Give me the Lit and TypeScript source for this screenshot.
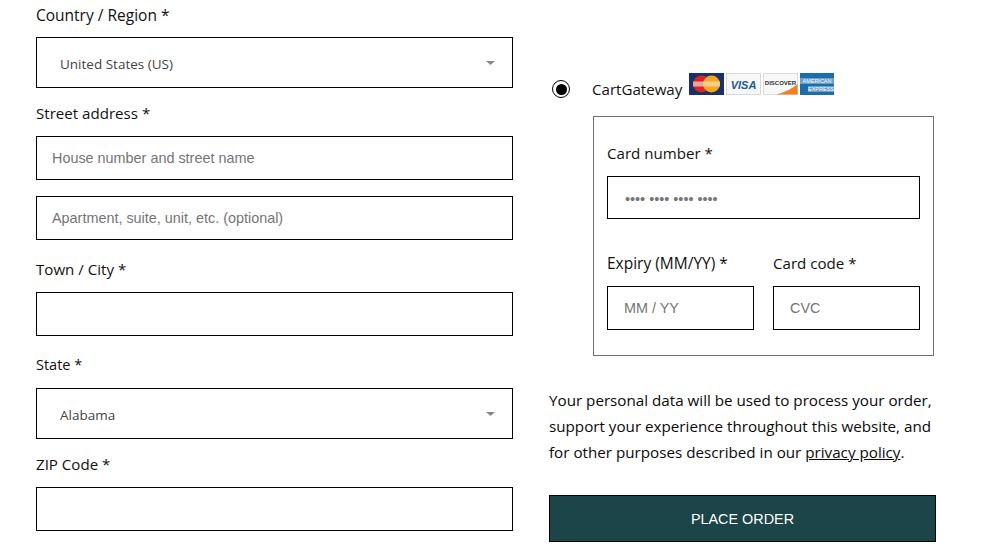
import { LitElement, html, css } from "lit";
import { customElement } from "lit/decorators.js";

const caret = html`<svg class="caret" width="9" height="4" viewBox="0 0 9 4"><path d="M0 0H9L4.500 4Z" fill="#888"/></svg>`;

@customElement("app-root")
export class AppRoot extends LitElement {
  static styles = css`
    :host { display: block; width: 993px; height: 553px; overflow: hidden; background: #fff; font-family: "Open Sans", "Noto Sans", sans-serif; font-size: 15.1px; color: #111; }
    * { box-sizing: border-box; }
    .page { display: flex; align-items: flex-start; padding-left: 36px; }
    .left { width: 477px; display: flex; flex-direction: column; flex: none; }
    .right { width: 387px; margin-left: 36px; flex: none; padding-top: 72px; display: flex; flex-direction: column; }
    .label { height: 22px; line-height: 22px; white-space: nowrap; }
    .wide { font-size: 15.5px; }
    .narrow { font-size: 14.5px; }
    .l0 { margin-top: 4px; margin-bottom: 11px; }
    .l1 { margin-top: 14px; margin-bottom: 12px; }
    .l2 { margin-top: 18px; margin-bottom: 12px; }
    .field { border: 1px solid #000; height: 44px; display: flex; align-items: center; padding-left: 15px; color: #757575; font-family: "Liberation Sans", Arial, sans-serif; font-size: 14.4px; background: #fff; }
    .gap { margin-top: 16px; }
    .select { height: 51px; padding-left: 23px; padding-right: 17px; justify-content: space-between; color: #444; font-family: "Open Sans", sans-serif; font-size: 13.5px; }
    .select span { padding-top: 3px; }
    .pay { display: flex; align-items: flex-start; height: 44px; }
    .radio { width: 18px; height: 18px; border-radius: 50%; border: 1.5px solid #000; margin: 8px 0 0 3px; display: flex; align-items: center; justify-content: center; flex: none; }
    .radio i { width: 11px; height: 11px; border-radius: 50%; background: #000; display: block; }
    .pay-name { margin-left: 22px; line-height: 22px; margin-top: 6px; }
    .logos { display: flex; gap: 2px; margin-left: 7px; margin-top: 1px; }
    .logos svg { display: block; }
    .box { border: 1px solid #6f6f6f; margin-left: 44px; width: 341px; height: 240px; padding: 25px 13px 0; display: flex; flex-direction: column; }
    .box .label { margin-bottom: 12px; }
    .box .field { height: 43px; padding-left: 16px; }
    .box .dots { padding-left: 17px; padding-top: 2px; }
    .split { display: flex; gap: 19px; margin-top: 33px; }
    .split > div { flex: 1 1 0; }
    .box .split .field { height: 44px; }
    .note { margin: 31px 0 0; line-height: 26px; white-space: nowrap; font-size: 15.2px; color: #0a0a0a; }
    .note a { color: inherit; text-decoration: underline; }
    .btn { margin-top: 30px; height: 47px; background: #1b4548; border: 1px solid #000; color: #fff; display: flex; align-items: center; justify-content: center; font-family: "Liberation Sans", Arial, sans-serif; font-size: 14.4px; }
  `;

  render() {
    return html`<div class="page">
      <div class="left">
        <div class="label l0 wide">Country / Region *</div>
        <div class="field select"><span>United States (US)</span>${caret}</div>
        <div class="label l1">Street address *</div>
        <div class="field">House number and street name</div>
        <div class="field gap">Apartment, suite, unit, etc. (optional)</div>
        <div class="label l2">Town / City *</div>
        <div class="field"></div>
        <div class="label l2 narrow">State *</div>
        <div class="field select"><span>Alabama</span>${caret}</div>
        <div class="label l1">ZIP Code *</div>
        <div class="field"></div>
      </div>
      <div class="right">
        <div class="pay">
          <span class="radio"><i></i></span>
          <span class="pay-name">CartGateway</span>
          <span class="logos">
            <svg width="35" height="22" viewBox="0 0 35 22"><rect width="35" height="22" fill="#1b2f6b"/><circle cx="12.500" cy="11" r="8.500" fill="#d9252b"/><circle cx="22.500" cy="11" r="8.500" fill="#f2a91e"/><rect x="4" y="8.500" width="27" height="5" fill="#f6dcc0" opacity=".7"/></svg>
            <svg width="35" height="22" viewBox="0 0 35 22"><rect x=".5" y=".5" width="34" height="21" fill="#f7f7f7" stroke="#d8d8d8"/><text x="17.500" y="15.500" text-anchor="middle" font-family="Liberation Sans" font-size="11" font-weight="700" font-style="italic" fill="#23598f">VISA</text></svg>
            <svg width="35" height="22" viewBox="0 0 35 22"><rect x=".5" y=".5" width="34" height="21" fill="#f8f8f8" stroke="#dcdcdc"/><path d="M13 21.500Q27 18 34.500 11V21.500Z" fill="#f0801f"/><text x="17.500" y="11.500" text-anchor="middle" font-family="Liberation Sans" font-size="6" font-weight="700" fill="#333">DISCOVER</text></svg>
            <svg width="34" height="22" viewBox="0 0 34 22"><rect width="34" height="22" fill="#1d6ea8"/><rect x="0" y="5" width="34" height="6" fill="#a9cbe4" opacity=".55"/><rect x="8" y="13" width="26" height="6" fill="#a9cbe4" opacity=".55"/><text x="17" y="10" text-anchor="middle" font-family="Liberation Sans" font-size="5.500" fill="#fff">AMERICAN</text><text x="21" y="18" text-anchor="middle" font-family="Liberation Sans" font-size="5.500" fill="#fff">EXPRESS</text></svg>
          </span>
        </div>
        <div class="box">
          <div class="label">Card number *</div>
          <div class="field dots">•••• •••• •••• ••••</div>
          <div class="split">
            <div><div class="label wide">Expiry (MM/YY) *</div><div class="field">MM / YY</div></div>
            <div><div class="label">Card code *</div><div class="field">CVC</div></div>
          </div>
        </div>
        <p class="note">Your personal data will be used to process your order,<br>support your experience throughout this website, and<br>for other purposes described in our <a href="#">privacy policy</a>.</p>
        <div class="btn">PLACE ORDER</div>
      </div>
    </div>`;
  }
}
